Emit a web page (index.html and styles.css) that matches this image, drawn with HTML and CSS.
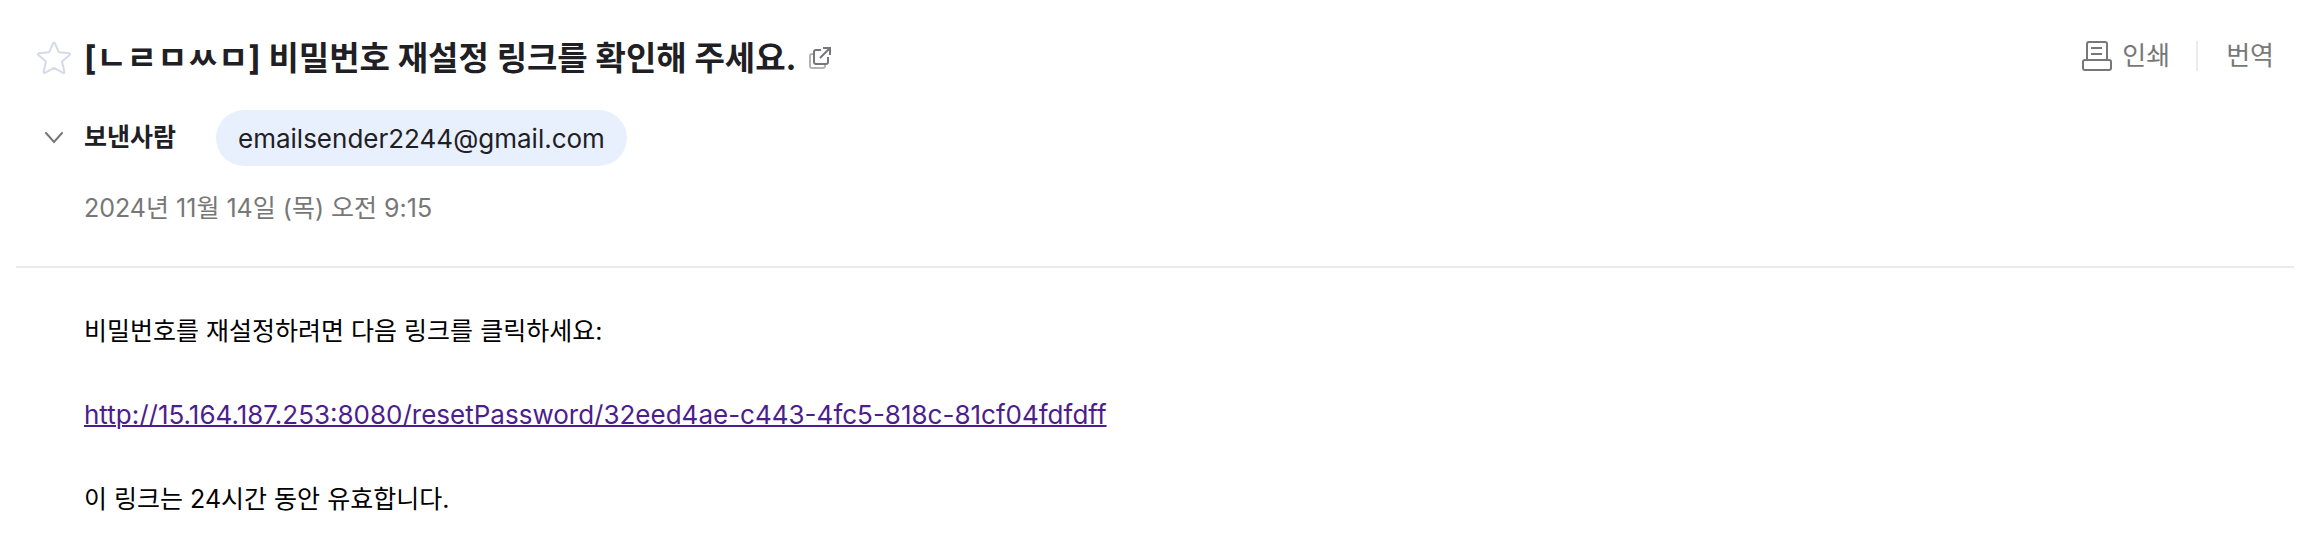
FILE: index.html
```html
<!DOCTYPE html>
<html lang="ko">
<head>
<meta charset="utf-8">
<meta name="viewport" content="width=device-width, initial-scale=1">
<title>[ㄴㄹㅁㅆㅁ] 비밀번호 재설정 링크를 확인해 주세요.</title>
<link rel="stylesheet" href="styles.css">
</head>
<body>
<main class="mail">
  <header class="mail-header">
    <div class="title-row">
      <button class="icon-button" type="button" aria-label="중요 표시">
        <svg width="34" height="34" viewBox="0 0 34 34" fill="none" stroke="#d6d9e8" stroke-width="2" stroke-linejoin="round"><path d="M16 2.500Q17 .5 18 2.500L21.800 11.200 32 12.300Q34 12.600 32.400 14.200L25 20.500 27.300 30.500Q27.500 32.800 25.600 31.700L17 26.800 8.400 31.700Q6.500 32.800 6.700 30.500L9 20.500 1.600 14.200Q0 12.600 2 12.300L12.200 11.200Z"/></svg>
      </button>
      <h1 class="title">[ㄴㄹㅁㅆㅁ] 비밀번호 재설정 링크를 확인해 주세요.</h1>
      <button class="icon-button" type="button" aria-label="새 창으로 보기">
        <svg width="22" height="22" viewBox="0 0 22 22" fill="none" stroke-width="2"><path stroke="#b4b4b4" d="M4 7H3Q1 7 1 9V19Q1 21 3 21H14Q16 21 16 19V18"/><path stroke="#77777b" d="M12 3H7Q5 3 5 5V15Q5 17 7 17H17Q19 17 19 15V10M14 1H21V8M21 1 11 11"/></svg>
      </button>
      <div class="tools">
        <button class="tool" type="button">
          <svg width="30" height="30" viewBox="0 0 30 30" fill="none" stroke="#777" stroke-width="2"><path d="M5 19V3Q5 1 7 1H23Q25 1 25 3V19M9 7H20M9 13H20"/><rect x="1" y="19" width="28" height="10" rx="2"/></svg>
          <span>인쇄</span>
        </button>
        <button class="tool tool-divided" type="button">번역</button>
      </div>
    </div>
    <div class="sender-row">
      <button class="icon-button" type="button" aria-label="상세 정보 펼치기">
        <svg width="20" height="12" viewBox="0 0 20 12" fill="none" stroke="#777" stroke-width="2" stroke-linecap="round"><path d="M2 1 10 10 18 1"/></svg>
      </button>
      <span class="sender-label">보낸사람</span>
      <button class="address" type="button">emailsender2244@gmail.com</button>
    </div>
    <time class="date" datetime="2024-11-14T09:15">2024년 11월 14일 (목) 오전 9:15</time>
  </header>
  <article class="body">
    <p>비밀번호를 재설정하려면 다음 링크를 클릭하세요:</p>
    <p><a class="link" href="http://15.164.187.253:8080/resetPassword/32eed4ae-c443-4fc5-818c-81cf04fdfdff">http://15.164.187.253:8080/resetPassword/32eed4ae-c443-4fc5-818c-81cf04fdfdff</a></p>
    <p>이 링크는 24시간 동안 유효합니다.</p>
  </article>
</main>
</body>
</html>
```
FILE: styles.css
```css
* {
  box-sizing: border-box;
}

body {
  margin: 0;
  background: #fff;
  color: #202024;
  font-family: Inter, "Noto Sans CJK KR", sans-serif;
  font-size: 25px;
}

h1,
p {
  margin: 0;
}

button {
  padding: 0;
  border: 0;
  background: none;
  color: inherit;
  font: inherit;
  cursor: pointer;
}

svg {
  display: block;
}

.mail {
  padding: 32px 30px 32px 16px;
}

.mail-header {
  padding-bottom: 40px;
  border-bottom: 2px solid #ebebee;
}

.title-row,
.sender-row {
  display: grid;
  grid-template-columns: 68px auto auto 1fr;
  align-items: center;
}

.title-row {
  min-height: 52px;
}

.sender-row {
  margin-top: 26px;
}

.icon-button {
  display: flex;
  justify-content: center;
  padding-left: 8px;
}

.title {
  font-size: 33px;
  line-height: 52px;
  font-weight: 700;
  padding-right: 4px;
}

.tools {
  display: flex;
  justify-content: flex-end;
  padding: 0 20px 4px 0;
  color: #777;
  font-size: 26px;
  line-height: 28px;
}

.tool {
  display: flex;
  align-items: center;
  gap: 10px;
}

.tool-divided {
  margin-left: 26px;
  padding-left: 28px;
  border-left: 2px solid #ebebeb;
}

.sender-label {
  font-weight: 700;
  line-height: 36px;
  padding-bottom: 2px;
}

.address {
  height: 56px;
  margin-left: 40px;
  padding: 0 22px;
  border-radius: 28px;
  background: #e9f0fd;
  font-size: 26px;
}

.date {
  display: block;
  margin: 24px 0 0 68px;
  color: #777;
  line-height: 36px;
}

.body {
  display: grid;
  gap: 42px;
  padding: 42px 0 0 68px;
  color: #000;
  line-height: 42px;
}

.link {
  color: #4c1d8c;
  font-size: 26px;
  text-decoration: underline;
  text-decoration-thickness: 2px;
  overflow-wrap: anywhere;
}
```
